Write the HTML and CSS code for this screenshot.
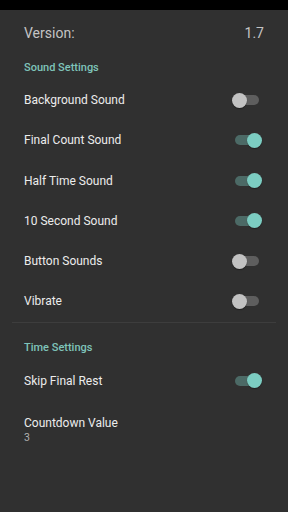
FILE: index.html
```html
<!DOCTYPE html>
<html>
<head>
<meta charset="utf-8">
<link rel="stylesheet" href="styles.css">
</head>
<body>
<div class="status"></div>
<div class="version">
  <span>Version:</span>
  <span>1.7</span>
</div>
<div class="header first">Sound Settings</div>
<div class="row"><span>Background Sound</span><span class="switch"></span></div>
<div class="row"><span>Final Count Sound</span><span class="switch on"></span></div>
<div class="row"><span>Half Time Sound</span><span class="switch on"></span></div>
<div class="row"><span>10 Second Sound</span><span class="switch on"></span></div>
<div class="row"><span>Button Sounds</span><span class="switch"></span></div>
<div class="row"><span>Vibrate</span><span class="switch"></span></div>
<div class="divider"></div>
<div class="header second">Time Settings</div>
<div class="row"><span>Skip Final Rest</span><span class="switch on"></span></div>
<div class="pref">
  <div class="title">Countdown Value</div>
  <div class="summary">3</div>
</div>
</body>
</html>
```
FILE: styles.css
```css
html, body {
  margin: 0;
  padding: 0;
  background: #303030;
  font-family: Roboto, "Noto Sans", sans-serif;
  width: 288px;
  height: 512px;
  overflow: hidden;
}
.status {
  height: 10px;
  background: #000;
}
.version {
  height: 46px;
  display: flex;
  align-items: center;
  justify-content: space-between;
  padding: 0 24px;
  font-size: 14px;
  color: #c4c4c4;
}
.header {
  height: 22px;
  display: flex;
  align-items: center;
  padding: 0 24px;
  font-size: 11px;
  font-weight: 500;
  color: #7fc4ba;
}
.header.first {
  margin-bottom: 2px;
}
.header.second {
  margin-top: 14px;
  margin-bottom: 2px;
}
.row {
  height: 40.25px;
  display: flex;
  align-items: center;
  justify-content: space-between;
  padding: 0 24px;
  font-size: 12px;
  color: #ececec;
}
.switch {
  position: relative;
  width: 24px;
  height: 10px;
  border-radius: 5px;
  background: #5e5e5e;
  margin-right: 5.5px;
}
.switch::after {
  content: "";
  position: absolute;
  top: -2.5px;
  left: -3px;
  width: 15px;
  height: 15px;
  border-radius: 50%;
  background: #c2c2c2;
  box-shadow: 0 1px 1px rgba(0,0,0,0.35);
}
.switch.on {
  background: #4c6a66;
}
.switch.on::after {
  left: 12px;
  background: #7ccdc2;
}
.divider {
  height: 1px;
  margin: 0 12px;
  background: #3d3d3d;
}
.pref {
  padding: 14px 24px 0;
}
.pref .title {
  font-size: 12px;
  color: #ececec;
  line-height: 16px;
}
.pref .summary {
  font-size: 10.5px;
  color: #b0b0b0;
  line-height: 14px;
}
```
